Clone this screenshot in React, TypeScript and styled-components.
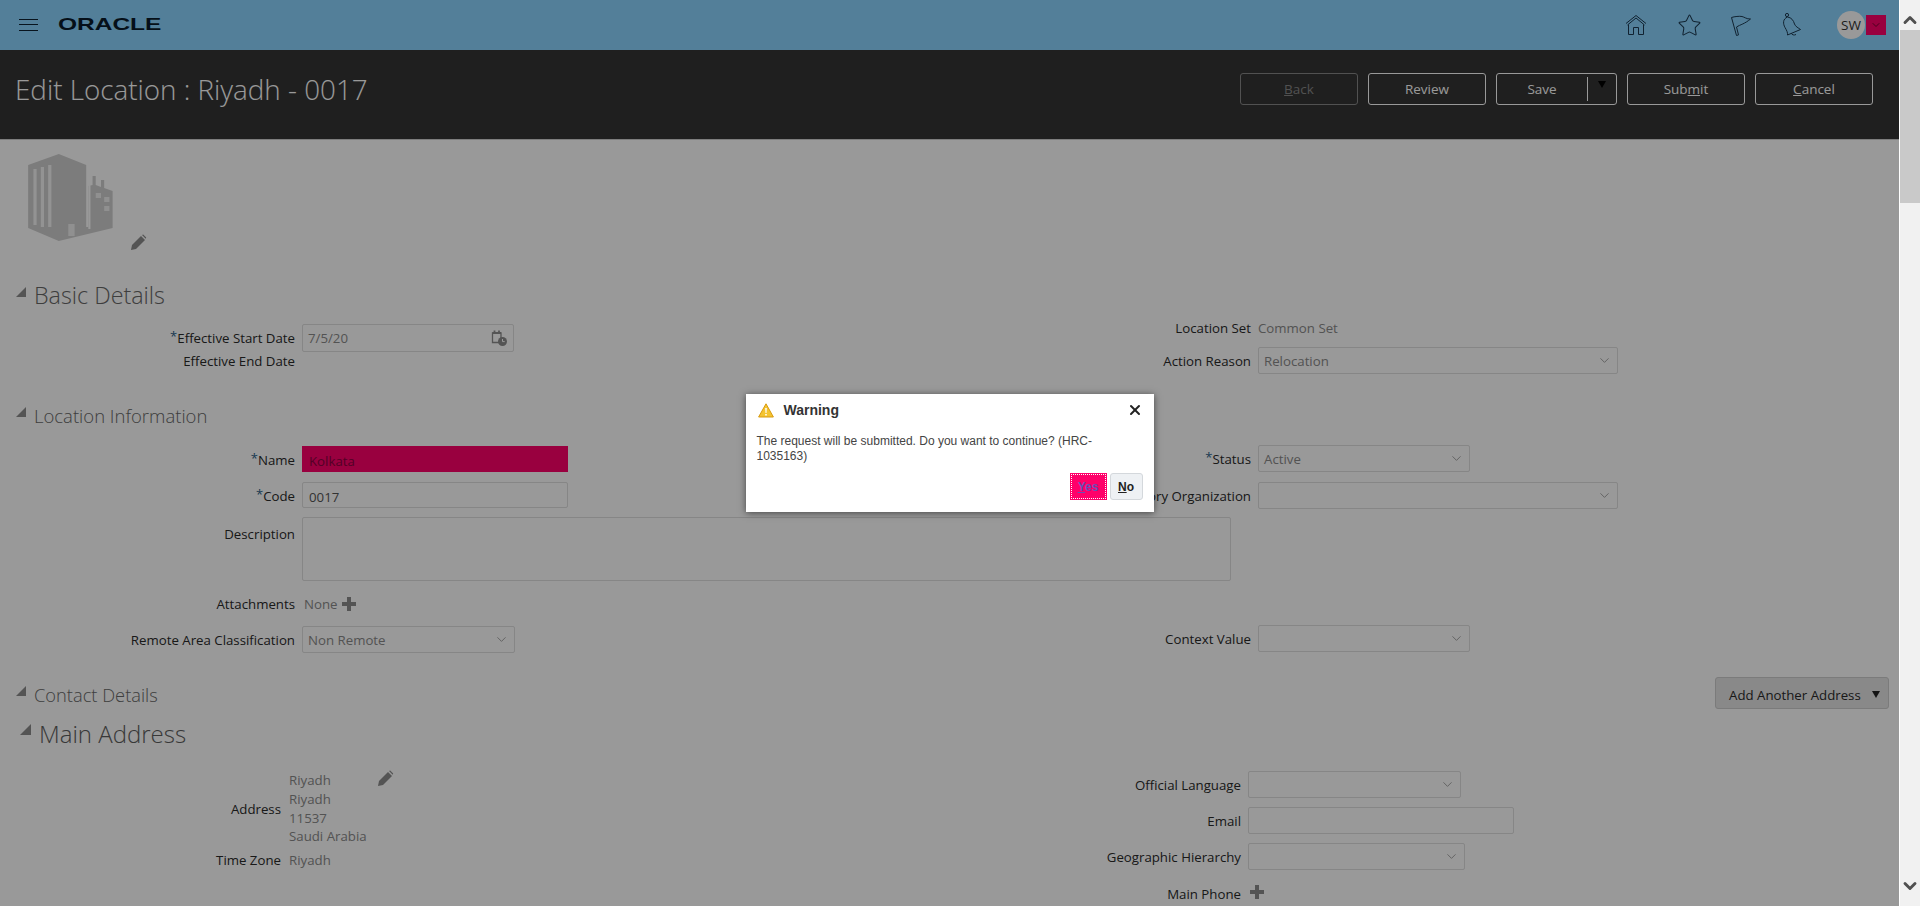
import React from "react";
import styled, { createGlobalStyle } from "styled-components";
import { ChevronDown, ChevronUp, Star, X } from "lucide-react";

const Global = createGlobalStyle`
  html, body { margin: 0; padding: 0; height: 100%; overflow: hidden; background: #fff; }
  #root { height: 100%; }
  * { box-sizing: border-box; }
`;

const FONT = `"Open Sans", "Noto Sans", sans-serif`;

const Shell = styled.div`
  display: flex;
  height: 906px;
  width: 1920px;
  font-family: ${FONT};
`;
const Page = styled.div`
  position: relative;
  flex: 1;
  min-width: 0;
  overflow: hidden;
  display: flex;
  flex-direction: column;
  background: #fff;
`;
const Overlay = styled.div`
  position: absolute;
  inset: 0;
  z-index: 5;
  background: rgba(0, 0, 0, 0.4);
  display: flex;
  align-items: center;
  justify-content: center;
`;

/* scrollbar */
const Scrollbar = styled.div`
  width: 21px;
  flex: none;
  display: flex;
  flex-direction: column;
  background: #f1f1f1;
  border-left: 1px solid #fff;
`;
const ScrollButton = styled.div<{ $up?: boolean }>`
  height: 30px;
  flex: none;
  display: flex;
  justify-content: center;
  align-items: flex-start;
  padding-top: ${(p) => (p.$up ? "10px" : "0")};
  color: #505050;
`;
const Track = styled.div`
  flex: 1;
  min-height: 0;
`;
const Thumb = styled.div`
  height: 173px;
  background: #c9c9c9;
`;

/* top bar */
const TopBar = styled.header`
  height: 50px;
  flex: none;
  background: #8ad4ff;
  display: flex;
  align-items: center;
  padding-left: 19px;
  color: #1d3a52;
`;
const Burger = styled.div`
  width: 19px;
  height: 12px;
  border-top: 1.5px solid #0e2233;
  border-bottom: 1.5px solid #0e2233;
  position: relative;
  &::after {
    content: "";
    position: absolute;
    left: 0;
    right: 0;
    top: 3.5px;
    border-top: 1.5px solid #0e2233;
  }
`;
const Logo = styled.div`
  margin-left: 20px;
  width: 103px;
  font-family: "Liberation Sans", sans-serif;
  font-size: 17px;
  font-weight: 700;
  line-height: 20px;
  color: #091a2a;
  transform: scaleX(1.44);
  transform-origin: left center;
`;
const TopIcons = styled.div`
  margin-left: auto;
  display: flex;
  align-items: center;
  padding-right: 13px;
`;
const TopIcon = styled.div<{ $w: number }>`
  width: ${(p) => p.$w}px;
  display: flex;
  justify-content: center;
`;
const Avatar = styled.div`
  width: 28px;
  height: 28px;
  border-radius: 50%;
  background: #fff;
  color: #333;
  font-size: 13.5px;
  display: flex;
  align-items: center;
  justify-content: center;
  margin-left: 5px;
`;
const AvatarMenu = styled.div`
  width: 20px;
  height: 20px;
  background: #ff0069;
  margin-left: 1px;
  display: flex;
  align-items: center;
  justify-content: center;
  color: #7a0032;
`;

/* title bar */
const TitleBar = styled.div`
  height: 90px;
  flex: none;
  background: #343434;
  border-bottom: 1px solid #d0d0d0;
  display: flex;
  padding: 23px 26px 0 15px;
`;
const Title = styled.h1`
  margin: -4px 0 0;
  font-size: 27.8px;
  font-weight: 300;
  line-height: 40px;
  color: #fff;
`;
const TitleActions = styled.div`
  margin-left: auto;
  display: flex;
  gap: 10px;
`;
const TrainButton = styled.div<{ $disabled?: boolean; $w?: number }>`
  width: ${(p) => p.$w ?? 118}px;
  height: 32px;
  border: 1px solid ${(p) => (p.$disabled ? "#888" : "#fff")};
  border-radius: 3px;
  color: ${(p) => (p.$disabled ? "#888" : "#fff")};
  font-size: 13.5px;
  display: flex;
  align-items: center;
  justify-content: center;
`;
const SaveLabel = styled.div`
  flex: 1;
  text-align: center;
  border-right: 1px solid #fff;
  height: 24px;
  line-height: 24px;
`;
const Caret = styled.div`
  width: 28px;
  display: flex;
  justify-content: center;
  margin-top: -8px;
`;

/* content */
const Content = styled.main`
  flex: 1;
  min-height: 0;
  overflow: hidden;
`;
const PhotoBlock = styled.div`
  height: 140px;
  padding: 13px 0 0 25px;
  display: flex;
  align-items: flex-start;
`;
const PhotoEdit = styled.div`
  margin: 81px 0 0 10px;
  display: flex;
`;
const SectionHead = styled.div<{ $left?: number; $top?: number; $size: number; $color?: string }>`
  height: 30px;
  display: flex;
  align-items: center;
  gap: 8px;
  margin-top: ${(p) => p.$top ?? 0}px;
  padding-left: ${(p) => p.$left ?? 16}px;
  font-size: ${(p) => p.$size}px;
  font-weight: 300;
  color: ${(p) => p.$color ?? "#686868"};
`;
const Disclosure = styled.span<{ $size?: number }>`
  width: 0;
  height: 0;
  flex: none;
  margin-top: -7px;
  border-style: solid;
  border-width: 0 0 ${(p) => p.$size ?? 10}px ${(p) => p.$size ?? 10}px;
  border-color: transparent transparent #8c8c8c transparent;
`;
const Form = styled.div<{ $h: number }>`
  display: grid;
  grid-template-columns: 950px 1fr;
  height: ${(p) => p.$h}px;
`;
const FormColumn = styled.div<{ $pad: number }>`
  padding-top: ${(p) => p.$pad}px;
  min-width: 0;
`;
const Row = styled.div<{ $lw: number; $mt?: number; $h?: number }>`
  display: flex;
  align-items: center;
  margin-top: ${(p) => p.$mt ?? 0}px;
  min-height: ${(p) => p.$h ?? 20}px;
  & > label {
    width: ${(p) => p.$lw}px;
  }
`;
const TopRow = styled(Row)`
  align-items: flex-start;
`;
const Label = styled.label<{ $pt?: number; $pr?: number }>`
  flex: none;
  text-align: right;
  padding-right: ${(p) => p.$pr ?? 7}px;
  padding-top: ${(p) => p.$pt ?? 0}px;
  font-size: 13.25px;
  color: #2a2a2a;
  white-space: nowrap;
`;
const Req = styled.sup`
  color: #2d5f88;
  font-size: 13px;
  line-height: 0;
  vertical-align: 2px;
`;
const Value = styled.div<{ $w?: number }>`
  font-size: 13.25px;
  color: #8a8a8a;
  ${(p) => p.$w && `width: ${p.$w}px;`}
  line-height: 18.67px;
`;
const Field = styled.div<{ $w: number; $h?: number; $accent?: boolean; $dark?: boolean; $text?: boolean }>`
  flex: none;
  width: ${(p) => p.$w}px;
  height: ${(p) => p.$h ?? 27}px;
  border: 1px solid ${(p) => (p.$accent ? "#ff0069" : "#dfdfdf")};
  border-radius: ${(p) => (p.$accent ? "0" : "2px")};
  background: ${(p) => (p.$accent ? "#ff0069" : "#fff")};
  display: flex;
  align-items: center;
  justify-content: space-between;
  padding: ${(p) => (p.$text ? "3px 6px 0 6px" : "0 5px 0 5px")};
  font-size: 13.25px;
  color: ${(p) => (p.$accent ? "#8a0040" : p.$dark ? "#555" : "#8a8a8a")};
`;
const PlusMark = styled.span<{ $ml?: number; $mt?: number }>`
  width: 14px;
  height: 14px;
  margin-left: ${(p) => p.$ml ?? 4}px;
  margin-top: ${(p) => p.$mt ?? 0}px;
  flex: none;
  background:
    linear-gradient(#8c8c8c, #8c8c8c) center / 14px 4px no-repeat,
    linear-gradient(#8c8c8c, #8c8c8c) center / 4px 14px no-repeat;
`;
const ContactHead = styled.div`
  display: flex;
  justify-content: space-between;
  margin-top: 25px;
  padding-right: 10px;
  height: 32px;
`;
const AddButton = styled.div`
  width: 174px;
  height: 32px;
  background: #e4e4e4;
  border: 1px solid #cdcdcd;
  border-radius: 3px;
  display: flex;
  align-items: center;
  padding: 4px 8px 0 13px;
  justify-content: space-between;
  font-size: 13.25px;
  color: #2a2a2a;
`;
const SmallCaret = styled.span<{ $color?: string }>`
  width: 0;
  height: 0;
  border-style: solid;
  border-width: 7px 4.5px 0 4.5px;
  border-color: ${(p) => p.$color ?? "#222"} transparent transparent transparent;
  margin-top: -2px;
`;
const RowPencil = styled.div`
  align-self: flex-start;
  display: flex;
  margin-top: -1px;
`;

/* dialog */
const Dialog = styled.div`
  width: 408px;
  height: 118px;
  background: #fff;
  box-shadow: 0 1px 7px rgba(0, 0, 0, 0.55);
  font-family: "Liberation Sans", Arial, sans-serif;
  display: flex;
  flex-direction: column;
  padding: 6px 11px 12px 11px;
`;
const DialogHead = styled.div`
  display: flex;
  align-items: center;
  height: 20px;
  padding-left: 1px;
  font-size: 14px;
  font-weight: 700;
  color: #333;
  gap: 10px;
`;
const DialogClose = styled.div`
  margin-left: auto;
  margin-right: 0;
  display: flex;
  color: #222;
`;
const DialogText = styled.p`
  margin: 14px 0 0;
  width: 345px;
  font-size: 12px;
  line-height: 15px;
  color: #444;
`;
const DialogActions = styled.div`
  margin-top: auto;
  display: flex;
  justify-content: flex-end;
  gap: 3px;
`;
const DialogButton = styled.div<{ $primary?: boolean }>`
  height: 27px;
  width: ${(p) => (p.$primary ? 37 : 33)}px;
  display: flex;
  align-items: center;
  justify-content: center;
  font-size: 12px;
  font-weight: 700;
  border-radius: ${(p) => (p.$primary ? "0" : "3px")};
  border: 1px solid ${(p) => (p.$primary ? "#ff0069" : "#d4d8dc")};
  background: ${(p) => (p.$primary ? "#ff0069" : "#eef1f4")};
  color: ${(p) => (p.$primary ? "#6a50b8" : "#222")};
  outline: ${(p) => (p.$primary ? "1px dotted #fff" : "none")};
  outline-offset: -2px;
`;

const Pencil = () => (
  <svg width="17" height="17" viewBox="0 0 17 17">
    <path d="M1 16l1-5L11 2l4 4-9 9z" fill="#8c8c8c" />
    <path d="M12 1l1.2-.5 3 3-.5 1.2z" fill="#8c8c8c" />
  </svg>
);

const Chevron = () => <ChevronDown size={15} strokeWidth={1.2} color="#888" />;

const Calendar = () => (
  <svg width="18" height="18" viewBox="0 0 18 18" fill="none">
    <path d="M2.5 4h8.5v9.5h-8.5z" stroke="#8c8c8c" strokeWidth="1.3" />
    <path d="M4.5 1.5v3M9 1.5v3M2.5 4h8.5" stroke="#8c8c8c" strokeWidth="1.8" />
    <circle cx="12.5" cy="12.5" r="4.5" fill="#8c8c8c" />
    <path d="M12.5 10v2.6h2.2" stroke="#fff" strokeWidth="1" />
  </svg>
);

const Building = () => (
  <svg width="95" height="92" viewBox="0 0 90 92" preserveAspectRatio="none">
    <path d="M3 12L32 1l26 11v62l2 0V33l4-1V23h3v9l5 2v-7h3v8l8 3v37L32 88 3 75z" fill="#cfcfcf" />
    <path d="M8 16h3v56H8zM15 14h3v60h-3zM22 12h3v62h-3z" fill="#f6f6f6" />
    <path d="M41 71h6v12h-6zM67 40h5v5h-5zM75 44h5v5h-5zM75 53h5v5h-5z" fill="#f0f0f0" />
    <path d="M60 31h2v45h-2z" fill="#fff" />
  </svg>
);

const Warn = () => (
  <svg width="16" height="15" viewBox="0 0 16 15">
    <path d="M8 .8L15.4 14H.6z" fill="#f4c430" stroke="#d89a10" strokeWidth="1" strokeLinejoin="round" />
    <path d="M7.2 5h1.6l-.3 5h-1zM7.2 11h1.6v1.6H7.2z" fill="#fff" />
  </svg>
);

const NAV = "#1d3a52";
const HomeIcon = () => (
  <svg width="24" height="24" viewBox="0 0 24 24" fill="none" stroke={NAV} strokeWidth="1">
    <path d="M2 10.5L12 2.5l10 8M3.5 12L12 5l8.500 7" />
    <path d="M4.500 11.500V21.500h5v-7h5v7h5V11.500" />
  </svg>
);
const FlagIcon = () => (
  <svg width="24" height="24" viewBox="0 0 24 24" fill="none" stroke={NAV} strokeWidth="1">
    <path d="M2.500 4.500l5 18 2-.6L7.500 14c4-2.500 8-3 14-8-4 .2-6-2-8.500-2.500S5.500 3.500 2.500 4.500z" />
  </svg>
);
const BellIcon = () => (
  <svg width="24" height="26" viewBox="0 0 24 26" fill="none" stroke={NAV} strokeWidth="1">
    <circle cx="6" cy="3" r="1.600" />
    <path d="M6.500 5c4 .5 6 3.500 7 7 .8 2.500 4 4 6 5.500l-13 5.500c.5-2-1-5-2.500-7.500C2 12 1.500 7 6.500 5z" />
    <path d="M10 21c1 2 3 2.500 5 1.500" />
  </svg>
);

export default function App() {
  return (
    <Shell>
      <Global />
      <Page>
        <TopBar>
          <Burger />
          <Logo>ORACLE</Logo>
          <TopIcons>
            <TopIcon $w={28}><HomeIcon /></TopIcon>
            <TopIcon $w={78}><Star size={25} strokeWidth={1} color={NAV} /></TopIcon>
            <TopIcon $w={26}><FlagIcon /></TopIcon>
            <TopIcon $w={78}><BellIcon /></TopIcon>
            <Avatar>SW</Avatar>
            <AvatarMenu><ChevronDown size={12} strokeWidth={2} /></AvatarMenu>
          </TopIcons>
        </TopBar>
        <TitleBar>
          <Title>Edit Location : Riyadh - 0017</Title>
          <TitleActions>
            <TrainButton $disabled><span><u>B</u>ack</span></TrainButton>
            <TrainButton>Review</TrainButton>
            <TrainButton $w={121}>
              <SaveLabel>Save</SaveLabel>
              <Caret><SmallCaret $color="#000" /></Caret>
            </TrainButton>
            <TrainButton><span>Sub<u>m</u>it</span></TrainButton>
            <TrainButton><span><u>C</u>ancel</span></TrainButton>
          </TitleActions>
        </TitleBar>
        <Content>
          <PhotoBlock>
            <Building />
            <PhotoEdit><Pencil /></PhotoEdit>
          </PhotoBlock>

          <SectionHead $size={23.3}><Disclosure />Basic Details</SectionHead>
          <Form $h={90}>
            <FormColumn $pad={14}>
              <Row $lw={302} $h={28}>
                <Label><Req>*</Req>Effective Start Date</Label>
                <Field $w={212} $h={28}>7/5/20<Calendar /></Field>
              </Row>
              <Row $lw={302} $mt={-1}><Label>Effective End Date</Label></Row>
            </FormColumn>
            <FormColumn $pad={8}>
              <Row $lw={308}>
                <Label>Location Set</Label>
                <Value>Common Set</Value>
              </Row>
              <Row $lw={308} $mt={9}>
                <Label>Action Reason</Label>
                <Field $w={360}>Relocation<Chevron /></Field>
              </Row>
            </FormColumn>
          </Form>

          <SectionHead $size={18.5}><Disclosure />Location Information</SectionHead>
          <Form $h={222}>
            <FormColumn $pad={16}>
              <Row $lw={302} $h={26}>
                <Label $pt={2}><Req>*</Req>Name</Label>
                <Field $w={266} $h={26} $accent $text>Kolkata</Field>
              </Row>
              <Row $lw={302} $mt={10} $h={26}>
                <Label $pt={2}><Req>*</Req>Code</Label>
                <Field $w={266} $h={26} $dark $text>0017</Field>
              </Row>
              <TopRow $lw={302} $mt={9}>
                <Label $pt={8}>Description</Label>
                <Field $w={929} $h={64} />
              </TopRow>
              <Row $lw={304} $mt={13}>
                <Label $pr={9}>Attachments</Label>
                <Value>None</Value>
                <PlusMark />
              </Row>
              <Row $lw={302} $mt={12} $h={27}>
                <Label>Remote Area Classification</Label>
                <Field $w={213} $h={27}>Non Remote<Chevron /></Field>
              </Row>
            </FormColumn>
            <FormColumn $pad={15}>
              <Row $lw={308}>
                <Label><Req>*</Req>Status</Label>
                <Field $w={212}>Active<Chevron /></Field>
              </Row>
              <Row $lw={308} $mt={10}>
                <Label>Inventory Organization</Label>
                <Field $w={360}><span /><Chevron /></Field>
              </Row>
              <Row $lw={308} $mt={116}>
                <Label>Context Value</Label>
                <Field $w={212}><span /><Chevron /></Field>
              </Row>
            </FormColumn>
          </Form>

          <ContactHead>
            <SectionHead $size={18.3} $top={2}><Disclosure />Contact Details</SectionHead>
            <AddButton>Add Another Address<SmallCaret /></AddButton>
          </ContactHead>
          <SectionHead $size={24} $left={20} $top={9} $color="#5e5e5e"><Disclosure $size={11} />Main Address</SectionHead>
          <Form $h={160}>
            <FormColumn $pad={23}>
              <Row $lw={289} $h={75}>
                <Label $pr={8}>Address</Label>
                <Value $w={88}>Riyadh<br />Riyadh<br />11537<br />Saudi Arabia</Value>
                <RowPencil><Pencil /></RowPencil>
              </Row>
              <Row $lw={289} $mt={4}>
                <Label $pr={8}>Time Zone</Label>
                <Value>Riyadh</Value>
              </Row>
            </FormColumn>
            <FormColumn $pad={23}>
              <Row $lw={298}>
                <Label>Official Language</Label>
                <Field $w={213}><span /><Chevron /></Field>
              </Row>
              <Row $lw={298} $mt={9}>
                <Label>Email</Label>
                <Field $w={266} />
              </Row>
              <Row $lw={298} $mt={9}>
                <Label>Geographic Hierarchy</Label>
                <Field $w={217}><span /><Chevron /></Field>
              </Row>
              <Row $lw={298} $mt={14}>
                <Label>Main Phone</Label>
                <PlusMark $ml={2} $mt={-4} />
              </Row>
            </FormColumn>
          </Form>
        </Content>

        <Overlay>
          <Dialog>
            <DialogHead>
              <Warn />
              Warning
              <DialogClose><X size={16} strokeWidth={3} /></DialogClose>
            </DialogHead>
            <DialogText>The request will be submitted. Do you want to continue? (HRC-1035163)</DialogText>
            <DialogActions>
              <DialogButton $primary><span><u>Y</u>es</span></DialogButton>
              <DialogButton><span><u>N</u>o</span></DialogButton>
            </DialogActions>
          </Dialog>
        </Overlay>
      </Page>
      <Scrollbar>
        <ScrollButton $up><ChevronUp size={20} strokeWidth={3.5} /></ScrollButton>
        <Track><Thumb /></Track>
        <ScrollButton><ChevronDown size={20} strokeWidth={3.5} /></ScrollButton>
      </Scrollbar>
    </Shell>
  );
}
